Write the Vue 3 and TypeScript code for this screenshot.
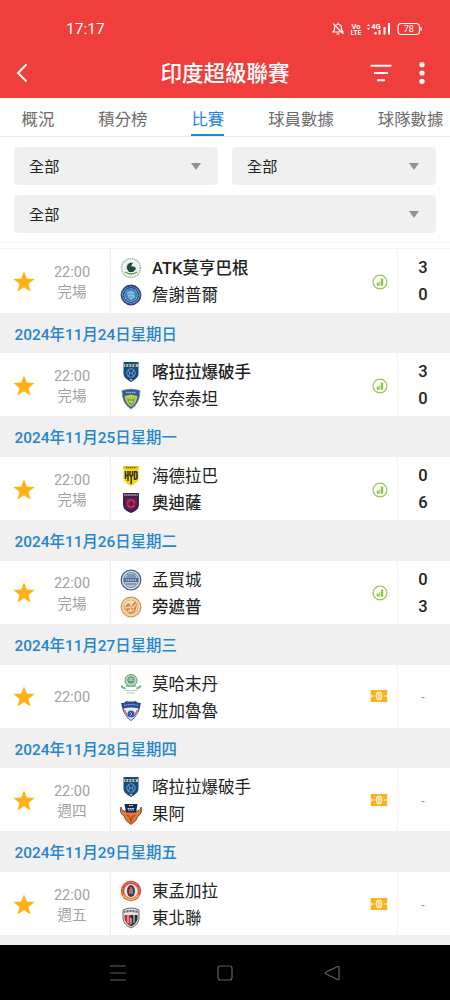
<script setup lang="ts">
import { ref } from 'vue'

interface Team {
  name: string
  crest: string
  winner?: boolean
  score?: number
}

interface Match {
  date?: string
  time: string
  status?: string
  teams: [Team, Team]
}

const tabs = ['概況', '積分榜', '比賽', '球員數據', '球隊數據']
const activeTab = ref('比賽')

const matches: Match[] = [
  {
    time: '22:00',
    status: '完場',
    teams: [
      { name: 'ATK莫亨巴根', crest: 'mohun', winner: true, score: 3 },
      { name: '詹謝普爾', crest: 'jamshedpur', score: 0 },
    ],
  },
  {
    date: '2024年11月24日星期日',
    time: '22:00',
    status: '完場',
    teams: [
      { name: '喀拉拉爆破手', crest: 'kerala', winner: true, score: 3 },
      { name: '钦奈泰坦', crest: 'chennai', score: 0 },
    ],
  },
  {
    date: '2024年11月25日星期一',
    time: '22:00',
    status: '完場',
    teams: [
      { name: '海德拉巴', crest: 'hyderabad', score: 0 },
      { name: '奧迪薩', crest: 'odisha', winner: true, score: 6 },
    ],
  },
  {
    date: '2024年11月26日星期二',
    time: '22:00',
    status: '完場',
    teams: [
      { name: '孟買城', crest: 'mumbai', score: 0 },
      { name: '旁遮普', crest: 'punjab', winner: true, score: 3 },
    ],
  },
  {
    date: '2024年11月27日星期三',
    time: '22:00',
    teams: [
      { name: '莫哈末丹', crest: 'mohammedan' },
      { name: '班加魯魯', crest: 'bengaluru' },
    ],
  },
  {
    date: '2024年11月28日星期四',
    time: '22:00',
    status: '週四',
    teams: [
      { name: '喀拉拉爆破手', crest: 'kerala' },
      { name: '果阿', crest: 'goa' },
    ],
  },
  {
    date: '2024年11月29日星期五',
    time: '22:00',
    status: '週五',
    teams: [
      { name: '東孟加拉', crest: 'eastbengal' },
      { name: '東北聯', crest: 'northeast' },
    ],
  },
]

const isPlayed = (match: Match) => match.teams[0].score !== undefined
</script>

<template>
  <div class="screen">
    <!-- crest artwork -->
    <svg class="sprite" aria-hidden="true">
      <symbol id="mohun" viewBox="0 0 22 22">
        <circle cx="11" cy="11" r="9.4" fill="#f3f6f3" stroke="#a9b3ab" stroke-width="1.6" stroke-dasharray="1.2 .6" />
        <circle cx="11" cy="11" r="7" fill="#e9efea" />
        <path d="M7 12c-1-4 2-7 6-6l-2 3 4 1 1 2-3 3H9z" fill="#234b40" />
        <path d="M5 15q6 4 12 0" fill="none" stroke="#55906b" stroke-width="1.3" />
      </symbol>
      <symbol id="jamshedpur" viewBox="0 0 22 22">
        <circle cx="11" cy="11" r="9.5" fill="#d9e5ee" stroke="#294780" stroke-width="1.8" />
        <circle cx="11" cy="11" r="7.4" fill="none" stroke="#344d87" stroke-width="1.6" />
        <circle cx="11" cy="11" r="6.4" fill="#2e88c6" />
        <path d="M7 8l4-1 3 1 1 5-4 3-3-3z" fill="#82c5df" />
        <path d="M8 10h6M9 13h4" stroke="#8f7fa8" stroke-width="1" />
      </symbol>
      <symbol id="kerala" viewBox="0 0 22 22">
        <path d="M3.5 1h15v12q0 4-7.5 8-7.5-4-7.5-8z" fill="#144a80" />
        <path d="M4 3h14v3H4z" fill="#b5c29a" />
        <path d="M5 3.5h1.5v2H5zM8 3.5h1.5v2H8zM11 3.5h1.5v2H11zM14 3.5h2v2h-2z" fill="#1e4972" />
        <circle cx="11" cy="12" r="4.2" fill="none" stroke="#819ca8" stroke-width="1" />
        <path d="M8 9l2 3-2 4M14 9l-2 3 2 4M9 12h4" fill="none" stroke="#5e91bd" stroke-width="1.2" />
        <path d="M9.5 18h3L11 20z" fill="#d6c668" />
      </symbol>
      <symbol id="chennai" viewBox="0 0 22 22">
        <path d="M2 2.5q9-3 18 0 0 13-9 18.5-9-5.5-9-18.5z" fill="#2b5c92" stroke="#748ea1" stroke-width=".7" />
        <path d="M6 4.500h10" stroke="#9bbbd3" stroke-width="1.300" stroke-dasharray="1.500 .5" />
        <path d="M4.500 8l6.500-1.500L17.500 8q-1 8-6.500 11-5.500-3-6.500-11z" fill="#c9c844" />
        <path d="M7 10l3 1h3l2-2-1 6-3 3-3-4z" fill="#6fa766" />
        <path d="M8 13h5l-1 2z" fill="#eee05f" />
      </symbol>
      <symbol id="hyderabad" viewBox="0 0 22 22">
        <path d="M3.5 1h15v13q-1 4-7.5 7-6.500-3-7.500-7z" fill="#f2d813" />
        <path d="M3.500 1h15v3h-15z" fill="#dfc31c" />
        <path d="M6 2.500h10" stroke="#4d4620" stroke-width=".8" stroke-dasharray="1.500 .5" />
        <path d="M5.500 6v8M8 6v10M5.500 10.500H8M10 6v5M12.500 6v5M10 11h2.500M11.200 11v8M14.500 6v9M14.500 6.700h1.700q.8 0 .8.800V13q0 1-.8 1h-1.700" fill="none" stroke="#302d17" stroke-width="1.500" />
      </symbol>
      <symbol id="odisha" viewBox="0 0 22 22">
        <path d="M3 1h16v12q0 5-8 8-8-3-8-8z" fill="#3b2158" />
        <path d="M4 3h14" stroke="#b6a2ba" stroke-width="1.500" stroke-dasharray="1.500 .6" />
        <path d="M5 6h12v7q-1 3-6 5-5-2-6-5z" fill="#7d174e" />
        <circle cx="11" cy="11.500" r="3.400" fill="none" stroke="#d23e59" stroke-width="1.500" />
        <path d="M11 8v7M7 12h8" stroke="#49224b" stroke-width=".8" />
      </symbol>
      <symbol id="mumbai" viewBox="0 0 22 22">
        <circle cx="11" cy="11" r="9.800" fill="#dce6ee" stroke="#4c6285" stroke-width="1.300" />
        <circle cx="11" cy="11" r="7.500" fill="#b8cad9" stroke="#7187a2" />
        <path d="M4 9h14v4H4z" fill="#526f99" />
        <path d="M6 8h10M7 6h8M6 15h10" stroke="#486590" stroke-width="1" />
        <path d="M6 11h10" stroke="#f0f4f8" stroke-width="1.200" stroke-dasharray="1.200 .6" />
      </symbol>
      <symbol id="punjab" viewBox="0 0 22 22">
        <circle cx="11" cy="11" r="9.800" fill="#f0d8b7" stroke="#d7914b" stroke-width="1.200" />
        <circle cx="11" cy="11" r="7" fill="#f4e4cc" stroke="#dfab71" stroke-width=".9" />
        <path d="M4 12l4-5 4 2 3-4 2 4-2 7-5 2z" fill="#dc8442" />
        <path d="M5 12l5-1 1 5M10 8l3 4 3-4M8 15l6-1" fill="none" stroke="#f7d5a8" stroke-width="1.300" />
      </symbol>
      <symbol id="mohammedan" viewBox="0 0 22 22">
        <circle cx="11" cy="7.500" r="6" fill="#bcdcc4" stroke="#649374" stroke-width="1" />
        <circle cx="11" cy="7" r="3.200" fill="#a9cfb3" stroke="#47805e" />
        <path d="M9.500 6.500h.8M11.800 6.500h.8M9.500 8.500h3" stroke="#3c7452" stroke-width=".8" />
        <path d="M7.500 11q3.500 3 7 0l2 3H5.500z" fill="#82b491" />
        <path d="M1.500 12.500q1 3 4 2.500M20.500 12.500q-1 3-4 2.500" fill="none" stroke="#74aa86" stroke-width="1.800" />
        <path d="M4 17q7 2 14 0M7 20h8" fill="none" stroke="#a5cfb1" stroke-width="1" />
      </symbol>
      <symbol id="bengaluru" viewBox="0 0 22 22">
        <path d="M1 3q4 0 5-2 5 1 10 0 1 2 5 2-2 13-10 18Q3 16 1 3z" fill="#304a91" />
        <path d="M3.500 8.500q7.500-2 15 0L17 14q-3 4-6 6-3-2-6-6z" fill="#e8eef7" />
        <path d="M4.500 10l3 6M17.500 10l-3 6" stroke="#cc506b" stroke-width="1.300" />
        <path d="M4 5.500q7-2 14 0" fill="none" stroke="#8aa2d0" stroke-width="1.200" stroke-dasharray="1.300 .6" />
        <circle cx="11" cy="14" r="3.500" fill="#3255a1" />
        <path d="M10 12l2 2-2 2" fill="none" stroke="#b8d0ef" stroke-width=".8" />
      </symbol>
      <symbol id="goa" viewBox="0 0 22 22">
        <path d="M1 4q0 3 3 4h14q3-1 3-4 2 6-3 9-1 5-7 8.500Q5 18 4 13-1 10 1 4z" fill="#e57a2d" stroke="#593c36" stroke-width=".8" />
        <path d="M4.500 1h13L16 9.500H6z" fill="#19275e" />
        <path d="M9 2.500h4M7.500 5.500h7M8 7h6" stroke="#d9dee7" stroke-width="1.200" stroke-dasharray="1.800 .5" />
        <path d="M6.500 12l3 1.500 1.500 5 1.500-5 3-1.500" fill="none" stroke="#a9492b" stroke-width="1.200" />
      </symbol>
      <symbol id="eastbengal" viewBox="0 0 22 22">
        <circle cx="11" cy="11" r="10.200" fill="#d9413d" />
        <circle cx="11" cy="11" r="8.600" fill="none" stroke="#efbe65" stroke-width=".9" stroke-dasharray="1 .7" />
        <path d="M3 15q8 9 16 0" fill="none" stroke="#efc24a" stroke-width="1.800" />
        <circle cx="11" cy="11" r="6.900" fill="#eee5de" />
        <ellipse cx="11" cy="11" rx="4" ry="6" fill="#40375d" />
        <path d="M10 7h2v2h1v5H9V9h1z" fill="#b87344" />
      </symbol>
      <symbol id="northeast" viewBox="0 0 22 22">
        <path d="M3 3q8-4 16 0v9q-1 6-8 9-7-3-8-9z" fill="#e1e1e1" stroke="#696a6c" stroke-width="1" />
        <path d="M4 5q7-2 14 0" fill="none" stroke="#585b5d" stroke-width="2" stroke-dasharray="1 .5" />
        <path d="M4.500 8H11v11.500q-5.500-3-6.500-7.500z" fill="#ba303b" />
        <path d="M11 8h6.500v4q-1 5-6.500 7.500z" fill="#292a2d" />
        <path d="M8 8v8M14 8v8M11 11v6" fill="none" stroke="#e3dfde" stroke-width="1.100" />
      </symbol>
    </svg>

    <header class="app-header">
      <div class="status-bar">
        <span class="clock">17:17</span>
        <svg class="status-icons" width="92" height="18" viewBox="0 0 92 18">
          <g fill="none" stroke="#fff" stroke-width="1.200" stroke-linecap="round">
            <path d="M2 12h10l-1.500-2.500V8c0-2-1.500-3.500-3.500-3.500S3.500 6 3.500 8v1.500zM7 3v1M6 14h2M2.500 4l9.500 9.500" />
            <rect x="67" y="3.500" width="21.500" height="11" rx="3.500" />
          </g>
          <path d="M89.500 7h1q1 2 0 4h-1z" fill="#fff" />
          <g class="glyphs" fill="#fff" text-anchor="middle">
            <text x="25" y="8.500" font-size="7.500">Vo</text>
            <text x="25" y="15" font-size="6.500">LTE</text>
            <text x="45" y="8.500" font-size="7.500">4G</text>
            <text x="77.700" y="12.300" font-size="9" class="battery">78</text>
          </g>
          <path d="M36 6l1.500-2L39 6zM36 8l1.500 2L39 8zM43.500 12h2v2.500h-2zM47.500 10h2v4.500h-2zM52.500 7h2v7.500h-2zM57 3h2v11.500h-2z" fill="#fff" />
        </svg>
      </div>
      <div class="title-bar">
        <button class="icon-button back" aria-label="返回">
          <svg width="12" height="20" viewBox="0 0 12 20">
            <path d="M10.500 1.500L2 10l8.500 8.500" fill="none" stroke="#fff" stroke-width="2" />
          </svg>
        </button>
        <h1>印度超級聯賽</h1>
        <div class="actions">
          <button class="icon-button" aria-label="篩選">
            <svg width="22" height="18" viewBox="0 0 22 18">
              <path d="M.5 1.700h21M4 9h14M7 16.300h8" stroke="#fff" stroke-width="2" />
            </svg>
          </button>
          <button class="icon-button" aria-label="更多">
            <svg width="6" height="22" viewBox="0 0 6 22" fill="#fff">
              <circle cx="3" cy="2.700" r="2.600" />
              <circle cx="3" cy="11" r="2.600" />
              <circle cx="3" cy="19.300" r="2.600" />
            </svg>
          </button>
        </div>
      </div>
    </header>

    <nav class="tabs">
      <button
        v-for="tab in tabs"
        :key="tab"
        class="tab"
        :class="{ active: tab === activeTab }"
        @click="activeTab = tab"
      >
        <span>{{ tab }}</span>
      </button>
    </nav>

    <div class="filters">
      <button v-for="n in 3" :key="n" class="select" :class="{ wide: n === 3 }">
        <span>全部</span>
        <i class="caret" />
      </button>
    </div>

    <main class="match-list">
      <div class="match-row previous" />
      <section v-for="(match, index) in matches" :key="index">
        <h2 v-if="match.date">{{ match.date }}</h2>
        <div class="match-row">
          <div class="favorite">
            <svg width="22" height="22" viewBox="0 0 22 22">
              <path d="M11 .4l2.800 7.200 7.700.4-6 4.900 2.100 7.600-6.600-4.300-6.600 4.300 2.100-7.600L.5 8l7.700-.4z" fill="#ffb115" />
            </svg>
          </div>
          <div class="kickoff">
            <span>{{ match.time }}</span>
            <span v-if="match.status">{{ match.status }}</span>
          </div>
          <div class="teams">
            <div v-for="team in match.teams" :key="team.name" class="team" :class="{ winner: team.winner }">
              <svg class="crest" width="22" height="22"><use :href="`#${team.crest}`" /></svg>
              <span>{{ team.name }}</span>
            </div>
          </div>
          <div class="extra">
            <svg v-if="isPlayed(match)" width="16" height="16" viewBox="0 0 16 16">
              <circle cx="8" cy="8" r="6.900" fill="none" stroke="#94c94f" stroke-width="1.300" />
              <path d="M4.700 8.500h2v3.300h-2zM9 4.500h2.200v7.300H9zM7.300 7h1v4.800h-1z" fill="#8bc53f" />
            </svg>
            <svg v-else class="ticket" width="18" height="14" viewBox="0 0 18 14">
              <path d="M.8 1h16.400v12H.8z" fill="#fbb11e" />
              <ellipse cx="9" cy="7" rx="2.800" ry="4" fill="#fbc75c" stroke="#fff3d5" stroke-width="1.200" />
              <path d="M9 4.500v5M3 6v2M15 6v2" stroke="#fff0c9" stroke-width="1.200" />
              <path d="M0 6h1.500v2H0zM16.500 6H18v2h-1.500z" fill="#fff" />
            </svg>
          </div>
          <div class="score">
            <template v-if="isPlayed(match)">
              <span v-for="team in match.teams" :key="team.name">{{ team.score }}</span>
            </template>
            <span v-else class="pending">-</span>
          </div>
        </div>
      </section>
    </main>

    <footer class="system-nav">
      <svg width="16" height="16" viewBox="0 0 16 16">
        <path d="M0 1h16M0 8h16M0 15h16" />
      </svg>
      <svg width="16" height="16" viewBox="0 0 16 16">
        <rect x="1" y="1" width="14" height="14" rx="2.500" />
      </svg>
      <svg width="16" height="16" viewBox="0 0 16 16">
        <path d="M13.500 1.500Q15 .7 15 2.500v11q0 1.800-1.500 1L1.800 8.800q-1.300-.8 0-1.600z" />
      </svg>
    </footer>
  </div>
</template>

<style>
body {
  background: #000;
}
</style>

<style scoped>
.screen {
  display: flex;
  flex-direction: column;
  width: 450px;
  height: 1000px;
  overflow: hidden;
  background: #fff;
  color: #222;
  font-family: Roboto, 'Noto Sans CJK TC', sans-serif;
}

.sprite {
  position: absolute;
  width: 0;
  height: 0;
}

button {
  padding: 0;
  border: none;
  background: none;
  color: inherit;
  font-family: inherit;
  cursor: pointer;
}

svg {
  display: block;
}

.app-header {
  flex: none;
  height: 98px;
  background: #ef3e3b;
  color: #fff;
}

.status-bar {
  display: flex;
  align-items: center;
  justify-content: space-between;
  height: 18px;
  padding: 20px 27px 0 66px;
}

.clock {
  font-size: 15.5px;
}

.glyphs {
  font-family: Roboto, sans-serif;
  font-weight: 700;
}

.battery {
  font-weight: 400;
}

.title-bar {
  display: grid;
  grid-template-columns: 80px 1fr 80px;
  align-items: center;
  height: 60px;
  margin-top: 5px;
}

.back {
  padding-left: 16px;
}

h1 {
  margin: 0;
  padding-top: 1px;
  text-align: center;
  font-size: 21.5px;
  font-weight: 500;
  line-height: 30px;
}

.actions {
  display: flex;
  align-items: center;
  justify-content: flex-end;
  gap: 27px;
  padding-right: 25px;
}

.tabs {
  display: flex;
  flex: none;
  height: 38px;
  margin-left: -0.5px;
  overflow: hidden;
  border-bottom: 1px solid #eee;
}

.tab {
  flex: none;
  padding: 0 22px;
  color: #6c6c6c;
  font-size: 16.4px;
}

.tab span {
  display: block;
  height: 36px;
  line-height: 43px;
  border-bottom: 2px solid transparent;
}

.tab.active {
  color: #2685cd;
}

.tab.active span {
  border-color: #2685cd;
}

.filters {
  display: grid;
  flex: none;
  grid-template-columns: 1fr 1fr;
  gap: 10px 14px;
  padding: 10px 14px 8px;
}

.select {
  display: flex;
  align-items: center;
  justify-content: space-between;
  height: 38px;
  padding: 0 17px 0 15px;
  border-radius: 4px;
  background: #f0f0f0;
  font-size: 15.2px;
}

.select span {
  padding-bottom: 2px;
}

.wide {
  grid-column: span 2;
}

.caret {
  border: 5.5px solid transparent;
  border-top: 7px solid #919191;
  border-bottom: 0;
}

.match-list {
  flex: 1;
  overflow: hidden;
  border-bottom: 10px solid #f0f0f0;
}

h2 {
  height: 40.75px;
  margin: 0;
  padding: 0 14.5px;
  background: #f0f0f0;
  color: #2685cd;
  font-size: 15.4px;
  font-weight: 500;
  line-height: 44.5px;
}

.match-row {
  display: grid;
  grid-template-columns: 48px 62px 251px 36px 53px;
  height: 63px;
}

.match-row.previous {
  height: 8px;
  border-top: 1px solid #f3f3f3;
  border-bottom: 1px solid #f3f3f3;
  box-sizing: border-box;
}

.match-row.previous + section .match-row {
  height: 63.5px;
}

.favorite,
.extra {
  display: flex;
  align-items: center;
  justify-content: center;
}

.favorite {
  padding-top: 2px;
}

.extra {
  padding: 2px 0 0 2px;
}

.ticket {
  margin: -2px 2px 0 0;
}

.kickoff {
  display: flex;
  flex-direction: column;
  align-items: center;
  justify-content: center;
  padding-top: 5px;
  margin-right: 14px;
  color: #a2a2a2;
  font-size: 14.5px;
  line-height: 20.5px;
}

.teams {
  display: flex;
  flex-direction: column;
  justify-content: center;
  gap: 5px;
  padding: 2px 0 0 9px;
  border-left: 1px solid #f0f0f0;
  font-size: 16.5px;
}

.team {
  display: flex;
  align-items: center;
  gap: 10px;
  height: 22px;
  line-height: 22px;
}

.team span {
  padding-top: 2px;
}

.winner {
  font-weight: 500;
}

.score {
  display: flex;
  flex-direction: column;
  align-items: center;
  justify-content: center;
  gap: 5px;
  padding: 2px 2px 0 0;
  border-left: 1px solid #f3f3f3;
  font-size: 16.5px;
  font-weight: 500;
  line-height: 22px;
}

.pending {
  color: #999;
  font-size: 14px;
  font-weight: 400;
}

.system-nav {
  display: flex;
  flex: none;
  align-items: center;
  justify-content: space-between;
  box-sizing: border-box;
  height: 55px;
  padding: 0 110px;
  background: #000;
}

.system-nav svg {
  fill: none;
  stroke: #606060;
  stroke-width: 1.2;
}
</style>
